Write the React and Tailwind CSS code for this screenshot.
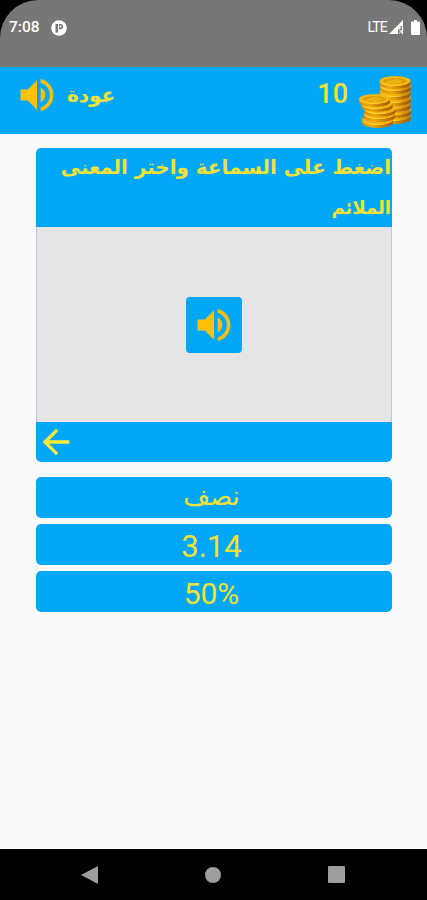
import React, { useState } from "react";
import { MdArrowBack, MdVolumeUp } from "react-icons/md";

const answers = [
  { id: 1, label: "نصف", className: "text-[26px] pb-1" },
  { id: 2, label: "3.14", className: "text-[31px] pt-1" },
  { id: 3, label: "50%", className: "text-[30px] pt-1" },
];

// bottom coin first
const backCoins = [
  { x: 39, y: 49 },
  { x: 39.5, y: 43 },
  { x: 39, y: 37 },
  { x: 39.5, y: 31 },
  { x: 39, y: 25 },
  { x: 39.5, y: 19 },
  { x: 39, y: 14 },
];
const frontCoins = [
  { x: 21.5, y: 53 },
  { x: 23.5, y: 47 },
  { x: 24, y: 42 },
  { x: 21, y: 37 },
  { x: 18.5, y: 32 },
];

const Coin = ({ x, y }) => (
  <g>
    <path
      d={`M${x - 15.5} ${y}v3a15.5 5 0 0 0 31 0v-3z`}
      fill="url(#coinEdge)"
    />
    <ellipse cx={x} cy={y} rx="15.500" ry="4.800" fill="#f2b20c" />
    <path
      d={`M${x - 14} ${y + 1.5}a14 4 0 0 0 20 2.500`}
      fill="none"
      stroke="#ffd235"
      strokeWidth="1.100"
    />
  </g>
);

const CoinFace = ({ x, y }) => (
  <g>
    <ellipse cx={x} cy={y} rx="15" ry="4.500" fill="#f6b90f" />
    <ellipse cx={x} cy={y} rx="12" ry="3" fill="#dfa00a" />
    <path
      d={`M${x - 8} ${y + 1.5}l11-3M${x - 2} ${y + 2}l8-2`}
      stroke="#f8c31e"
      strokeWidth="1.200"
    />
  </g>
);

const Coins = () => (
  <svg className="h-[62px] w-[60px]" viewBox="0 0 60 62">
    <defs>
      <linearGradient id="coinEdge">
        <stop offset="0" stopColor="#dc8b06" />
        <stop offset="0.35" stopColor="#edaa0a" />
        <stop offset="0.65" stopColor="#c97f06" />
        <stop offset="1" stopColor="#a35a0a" />
      </linearGradient>
      <linearGradient id="coinShade">
        <stop offset="0.5" stopColor="#9a5406" stopOpacity="0" />
        <stop offset="1" stopColor="#9a5406" stopOpacity="0.5" />
      </linearGradient>
    </defs>
    {backCoins.map((coin) => (
      <Coin key={coin.y} x={coin.x} y={coin.y} />
    ))}
    <path d="M24 18q15 8 30 0v33q-15 8-30 0z" fill="url(#coinShade)" />
    <CoinFace x={39} y={14} />
    {frontCoins.map((coin) => (
      <Coin key={coin.y} x={coin.x} y={coin.y} />
    ))}
    <CoinFace x={18.5} y={32} />
  </svg>
);

const StatusBar = () => (
  <div className="h-[67px] bg-black">
    <div className="flex h-full items-start justify-between rounded-t-[38px] bg-[#777777] pt-[19px] pr-[7px] pl-[9px] font-['Roboto',sans-serif] text-white">
      <div className="flex h-[17px] items-center">
        <span className="w-[42px] text-[15.500px] font-medium">7:08</span>
        <svg className="h-4 w-4" viewBox="0 0 16 16">
          <circle cx="8" cy="8" r="7.800" fill="#fff" />
          <path d="M4.500 4h2.500v8.500H4.500z" fill="#777" />
          <path
            d="M8 4h1.500a2.500 2.500 0 0 1 0 5.200H8z"
            fill="#777"
          />
          <circle cx="9.500" cy="6.500" r="0.900" fill="#fff" />
        </svg>
      </div>
      <div className="flex h-[17px] items-center">
        <span className="text-[14px] tracking-[-0.8px]">LTE</span>
        <svg className="ml-0.5 h-[15px] w-[15px]" viewBox="0 0 15 15">
          <path d="M0 14L14 0v6h-2.500v3H9v5z" fill="#fff" />
          <path
            d="M13.400 1v13M1 13.500h8M10 9.500l3.700 4M13.700 9.500l-3.700 4"
            fill="none"
            stroke="#fff"
            strokeWidth="1"
          />
        </svg>
        <svg className="ml-[7px] h-[15px] w-[9px]" viewBox="0 0 9 15">
          <path
            d="M3 0h3v1.500h2a1 1 0 0 1 1 1V14a1 1 0 0 1-1 1H1a1 1 0 0 1-1-1V2.500a1 1 0 0 1 1-1h2z"
            fill="#fff"
          />
        </svg>
      </div>
    </div>
  </div>
);

const App = () => {
  const [selected, setSelected] = useState(null);

  return (
    <div className="flex h-[900px] w-[427px] flex-col overflow-hidden bg-[#fafafa] font-['Roboto','DejaVu_Sans',sans-serif] text-[#f4e136]">
      <StatusBar />

      <header className="flex h-[67px] items-start justify-between bg-[#02a7fa] pr-[11px] pl-[15px]">
        <div className="flex items-center pt-[6px]">
          <button type="button">
            <MdVolumeUp className="text-[44px] text-[#ffc107]" />
          </button>
          <span
            dir="rtl"
            className="ml-[8px] font-['DejaVu_Sans',sans-serif] text-[20px] leading-[40px] font-bold"
          >
            عودة
          </span>
        </div>
        <div className="flex items-start">
          <span className="mr-[8px] pt-[9px] text-[27px] leading-[36px] font-medium">
            10
          </span>
          <Coins />
        </div>
      </header>

      <main className="flex flex-1 flex-col pt-[14px] pr-[35px] pl-[36px]">
        <section className="flex h-[314px] flex-col overflow-hidden rounded-[5px] bg-[#02a7fa]">
          <h1
            dir="rtl"
            className="h-[79px] pr-px font-['DejaVu_Sans',sans-serif] text-[19.900px] leading-[40px] font-bold"
          >
            اضغط على السماعة واختر المعنى
            <br />
            <span className="text-[18px]">الملائم</span>
          </h1>
          <div className="flex h-[195px] items-center justify-center border-x border-[#b3cdf3] bg-[#e5e5e5]">
            <button
              type="button"
              className="flex h-14 w-14 items-center justify-center rounded-[4px] bg-[#02a7fa]"
            >
              <MdVolumeUp className="text-[44px] text-[#ffc107]" />
            </button>
          </div>
          <div className="flex h-10 items-center">
            <MdArrowBack className="text-[40px] text-[#ffeb3b]" />
          </div>
        </section>

        <div className="mt-[15px] flex flex-col gap-[6px]">
          {answers.map((answer) => (
            <button
              key={answer.id}
              type="button"
              onClick={() => setSelected(answer.id)}
              className={`flex h-[41px] items-center justify-center rounded-[5px] bg-[#02a7fa] pr-[5px] leading-none ${
                answer.className
              } ${selected === answer.id ? "opacity-80" : ""}`}
            >
              {answer.label}
            </button>
          ))}
        </div>
      </main>

      <nav className="flex h-[51px] items-center justify-between bg-black pr-[82px] pl-[81px]">
        <svg className="h-[18px] w-[17px]" viewBox="0 0 17 18">
          <path d="M0 9L17 0v18z" fill="#9e9e9e" />
        </svg>
        <span className="h-4 w-4 rounded-full bg-[#9e9e9e]" />
        <span className="h-[17px] w-[17px] rounded-[1px] bg-[#9e9e9e]" />
      </nav>
    </div>
  );
};

export default App;
